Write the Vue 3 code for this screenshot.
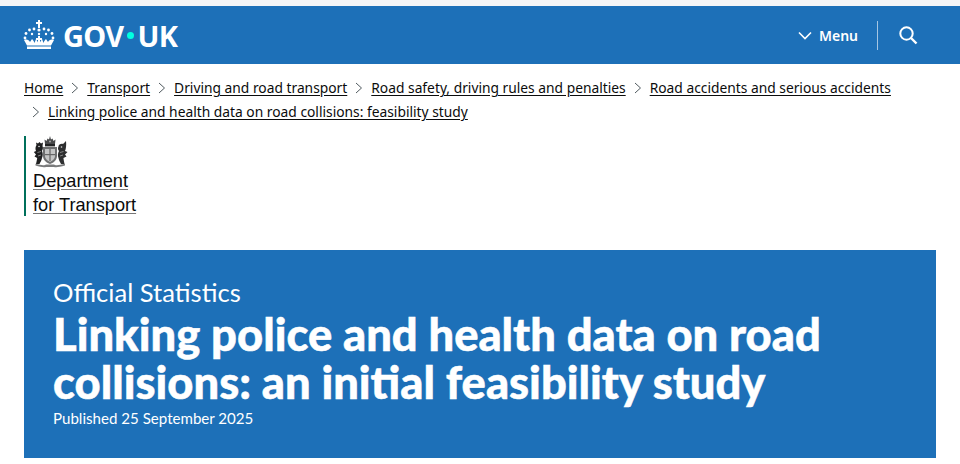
<template>
  <div class="page">
    <header class="topbar">
      <a class="logo">
        <svg class="crown" viewBox="0 0 32 30" width="32" height="30">
          <g fill="#fff">
            <rect x="15" y="0" width="2" height="8" />
            <rect x="13" y="2" width="6" height="2" />
            <circle cx="16" cy="10" r="1.6" />
            <circle cx="11" cy="9" r="1.4" />
            <circle cx="21" cy="9" r="1.4" />
            <circle cx="6.5" cy="10" r="1.4" />
            <circle cx="25.5" cy="10" r="1.4" />
            <circle cx="3" cy="13.5" r="1.4" />
            <circle cx="29" cy="13.5" r="1.4" />
            <circle cx="9" cy="14" r="1.2" />
            <circle cx="23" cy="14" r="1.2" />
            <circle cx="16" cy="14" r="1.2" />
            <circle cx="2" cy="18" r="1.4" />
            <circle cx="30" cy="18" r="1.4" />
            <rect x="15" y="16" width="2" height="8" />
            <rect x="13" y="18" width="6" height="2" />
            <path d="M1 20 C4 19 6 20 7 22 L9 19 C10 20 11 21 11.5 23 L13 19 L16 24 L19 19 L20.5 23 C21 21 22 20 23 19 L25 22 C26 20 28 19 31 20 L28 25.5 L4 25.5 Z" />
            <rect x="4" y="26.5" width="24" height="2.5" />
          </g>
        </svg>
        <span class="wordmark">GOV<span class="dot"></span>UK</span>
      </a>
      <div class="nav">
        <span class="menu">
          <svg viewBox="0 0 14 9" width="14" height="9">
            <path d="M1 1.5 L7 7.5 L13 1.5" fill="none" stroke="#fff" stroke-width="1.6" />
          </svg>
          Menu
        </span>
        <span class="divider"></span>
        <svg class="search" viewBox="0 0 20 20" width="20" height="20">
          <circle cx="8.5" cy="8.5" r="6.2" fill="none" stroke="#fff" stroke-width="2" />
          <path d="M13 13 L18.5 18.5" stroke="#fff" stroke-width="2.4" />
        </svg>
      </div>
    </header>

    <main class="content">
      <nav class="crumbs">
        <template v-for="(c, i) in crumbs" :key="c">
          <span class="crumb">
            <svg v-if="i" class="chev" viewBox="0 0 8 12" width="8" height="12">
              <path d="M1 1 L6.5 6 L1 11" fill="none" stroke="#505a5f" stroke-width="1" />
            </svg>
            <a>{{ c }}</a>
          </span>
        </template>
      </nav>

      <a class="org">
        <svg class="crest" viewBox="0 0 36 32" width="36" height="32">
          <!-- crown -->
          <path d="M12 8 L11.5 3.5 L13.5 5 L14.5 2.5 L16 3.5 L17 0 L18 3.5 L19.5 2.5 L20.5 5 L22.5 3.5 L22 8 Z" fill="#48494a" />
          <rect x="12" y="8" width="10" height="2.4" fill="#232425" />
          <circle cx="17" cy="5.5" r="1" fill="#aaa" />
          <!-- shield and garter -->
          <path d="M10 11 H24 V20 C24 24.5 20 27 17 28 C14 27 10 24.5 10 20 Z" fill="#6f7071" />
          <path d="M12 13 H22 V20 C22 23 19 25 17 26 C15 25 12 23 12 20 Z" fill="#c4c5c5" />
          <rect x="16.4" y="13" width="1.2" height="12" fill="#666" />
          <rect x="12" y="18" width="10" height="1.2" fill="#666" />
          <!-- lion -->
          <path d="M3.5 9 L3 6.5 L5 7.5 L6.5 6 L8 7.5 L10 6.5 L9.5 10 C10.5 12 9.5 14 9 15 C10 17 10 20 9 22 C8.5 24.5 7.5 26 6.5 28 L3 28 C3.6 26 3.8 24 4.2 22 L1.5 20.5 L3 18.5 L0.8 16 L3 15 C2.2 13 2.3 11 3.5 9 Z" fill="#1f2021" />
          <circle cx="6" cy="10.5" r="0.8" fill="#ddd" />
          <path d="M4.5 16.5 L8 15.5 M5 20 L8 19" stroke="#aaa" stroke-width="0.7" />
          <!-- unicorn -->
          <path d="M33 5 L30 8 C28 7.5 25.5 8.5 25.5 10.5 C24.5 12 25 14 26 15 C24.8 17 24.5 20 25.5 22 C26 24.5 27 26 28 28 L31.5 28 C31 26 30.8 24 30.4 22 L33.5 20.5 L32 18.5 L34.5 16 L32 15 C33 13 33.5 9 33 5 Z" fill="#2e2f30" />
          <circle cx="28.5" cy="11" r="0.8" fill="#ddd" />
          <path d="M27 16.5 L30.5 15.5 M27 20 L30 19" stroke="#aaa" stroke-width="0.7" />
          <!-- motto -->
          <path d="M2.5 27.8 C8 29.5 12 29.5 13 28.5 H21 C22 29.5 26 29.5 32 27.8 V29.6 C26 31.6 22 31.4 21 31 H13 C12 31.4 8 31.6 2.5 29.6 Z" fill="#7a7b7c" />
        </svg>
        <span class="org-name"><span>Department</span><span>for Transport</span></span>
      </a>

      <section class="hero">
        <p class="kicker">Official Statistics</p>
        <h1>Linking police and health data on road collisions: an initial feasibility study</h1>
        <p class="date">Published 25 September 2025</p>
      </section>
    </main>
  </div>
</template>

<script setup>
const crumbs = [
  'Home',
  'Transport',
  'Driving and road transport',
  'Road safety, driving rules and penalties',
  'Road accidents and serious accidents',
  'Linking police and health data on road collisions: feasibility study',
]
</script>

<style>
html,
body {
  margin: 0;
  background: #fff;
}
</style>

<style scoped>
.page {
  height: 464px;
  overflow: hidden;
  padding-top: 6px;
  box-sizing: border-box;
  background: linear-gradient(#f4f5f7 6px, #fff 6px);
  font-family: "Noto Sans", Arial, sans-serif;
  color: #0b0c0c;
}
.topbar {
  height: 58px;
  background: #1d70b8;
  display: flex;
  align-items: center;
  justify-content: space-between;
  padding: 0 42px 0 23px;
}
.logo {
  display: flex;
  align-items: center;
  gap: 8px;
  color: #fff;
}
.wordmark {
  font-family: "Noto Sans", Arial, sans-serif;
  font-size: 29px;
  font-weight: 700;
  letter-spacing: -0.7px;
  display: flex;
  align-items: center;
}
.dot {
  width: 7px;
  height: 7px;
  border-radius: 50%;
  background: #00ffe0;
  margin: 0 3px 0 4px;
}
.nav {
  display: flex;
  align-items: center;
  color: #fff;
}
.menu {
  display: flex;
  align-items: center;
  gap: 7px;
  font-size: 14px;
  font-weight: 600;
}
.divider {
  width: 1px;
  height: 29px;
  background: #a5c6e3;
  margin: 0 20px 0 19px;
}
.content {
  padding: 0 24px;
}
.crumbs {
  display: flex;
  flex-wrap: wrap;
  padding-top: 14px;
  row-gap: 4px;
  font-size: 13.8px;
  line-height: 20px;
}
.crumb {
  display: flex;
  align-items: center;
}
.crumb a {
  text-decoration: underline;
  text-underline-offset: 2px;
}
.chev {
  margin: 0 8px;
}
.org {
  display: block;
  margin-top: 14px;
  padding-left: 7px;
  border-left: 2px solid #00705b;
  height: 80px;
  width: 130px;
}
.crest {
  display: block;
}
.org-name {
  display: block;
  margin-top: 1px;
  font-family: "Liberation Sans", Arial, sans-serif;
  font-size: 18.2px;
  line-height: 24px;
}
.org-name span {
  display: table;
  text-decoration: underline;
  text-decoration-color: #777;
  text-underline-offset: 2px;
}
.hero {
  margin-top: 34px;
  height: 208px;
  box-sizing: border-box;
  background: #1d70b8;
  color: #fff;
  padding: 27px 29px;
  font-family: Lato, "Noto Sans", sans-serif;
}
.kicker {
  margin: 0 0 3px;
  font-size: 25.6px;
  line-height: 30px;
}
h1 {
  margin: 0;
  font-size: 45.3px;
  line-height: 48px;
  font-weight: 900;
  -webkit-text-stroke: 0.5px #fff;
}
.date {
  margin: 2px 0 0;
  font-size: 15.1px;
  line-height: 20px;
}
</style>
